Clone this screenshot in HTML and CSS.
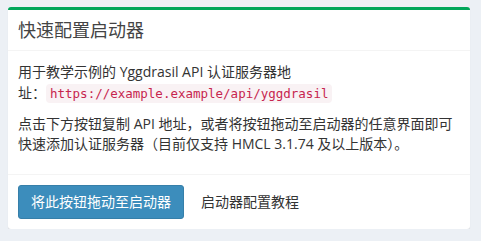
FILE: index.html
```html
<!DOCTYPE html>
<html lang="zh-CN">
<head>
<meta charset="utf-8">
<link rel="stylesheet" href="styles.css">
</head>
<body>
<div class="box">
  <div class="box-header">
    <h3 class="box-title">快速配置启动器</h3>
  </div>
  <div class="box-body">
    <p>用于教学示例的 Yggdrasil API 认证服务器地<span class="nowrap">址：<code>https://example.example/api/yggdrasil</code></span></p>
    <p>点击下方按钮复制 API 地址，或者将按钮拖动至启动器的任意界面即可快速添加认证服务器（目前仅支持 HMCL 3.1.74 及以上版本）。</p>
  </div>
  <div class="box-footer">
    <a class="btn btn-primary">将此按钮拖动至启动器</a>
    <a class="btn btn-link">启动器配置教程</a>
  </div>
</div>
</body>
</html>
```
FILE: styles.css
```css
html, body {
  margin: 0;
  padding: 0;
}
body {
  background: #ecf0f5;
  font-family: "Open Sans", "Noto Sans CJK SC", sans-serif;
  font-size: 14px;
  line-height: 20px;
  color: #333;
  padding: 7px 11px 0 8px;
}
.box {
  background: #fff;
  border-top: 3px solid #00a65a;
  border-radius: 3px;
  box-shadow: 0 1px 1px rgba(0,0,0,0.1);
}
.box-header {
  padding: 10px;
  border-bottom: 1px solid #f4f4f4;
}
.box-title {
  margin: 0;
  font-size: 18px;
  line-height: 20px;
  font-weight: normal;
  color: #444;
}
.box-body {
  padding: 10px;
}
.box-body p {
  margin: 0 0 10px;
}
.box-body p:first-child {
  line-height: 21px;
}
.nowrap {
  white-space: nowrap;
}
code {
  font-family: "DejaVu Sans Mono", monospace;
  font-size: 12.5px;
  color: #c7254e;
  background: #f9f2f4;
  padding: 2px 4px;
  border-radius: 4px;
}
.box-footer {
  border-top: 1px solid #f4f4f4;
  padding: 10px;
  display: flex;
  gap: 4px;
}
.btn {
  display: inline-block;
  padding: 6px 12px;
  font-size: 14px;
  line-height: 20px;
  border: 1px solid transparent;
  border-radius: 3px;
  cursor: pointer;
}
.btn-primary {
  background: #3c8dbc;
  border-color: #367fa9;
  color: #fff;
}
.btn-link {
  color: #333;
}
```
